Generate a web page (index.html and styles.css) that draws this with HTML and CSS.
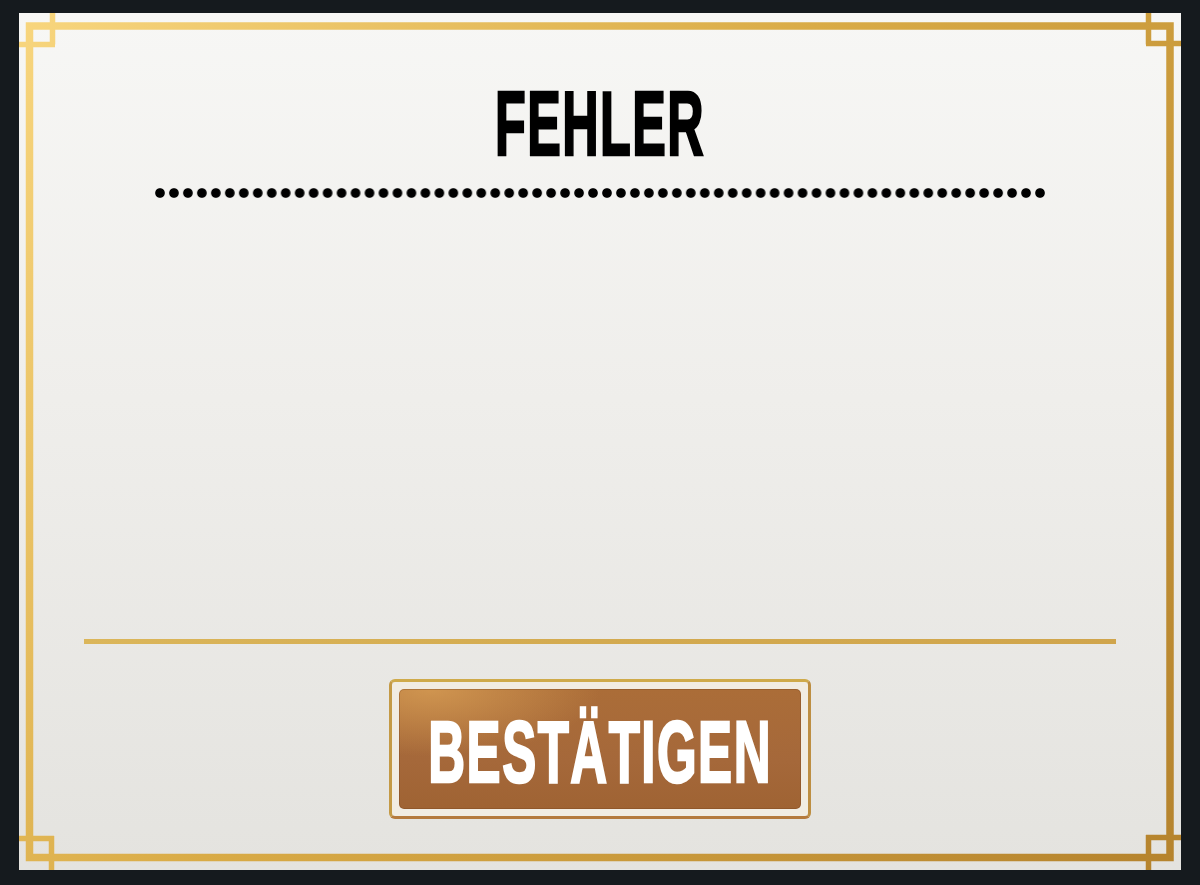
FILE: index.html
```html
<!DOCTYPE html>
<html lang="de">
<head>
<meta charset="utf-8">
<title>Fehler</title>
<link rel="stylesheet" href="styles.css">
</head>
<body>
<div class="panel">
  <svg class="frame" width="1162" height="857" viewBox="0 0 1162 857" aria-hidden="true">
    <defs>
      <linearGradient id="gold" gradientUnits="userSpaceOnUse" x1="0" y1="0" x2="1162" y2="857">
        <stop offset="0" stop-color="#f8d67e"/>
        <stop offset="0.45" stop-color="#d9ab46"/>
        <stop offset="1" stop-color="#b5832d"/>
      </linearGradient>
    </defs>
    <g fill="none" stroke="url(#gold)">
      <rect x="10.5" y="13" width="1140.5" height="831.5" stroke-width="7.5"/>
      <path d="M33.5 0 V31.5 M0 31.5 H36 M1129.5 0 V31.5 M1127 30.5 H1162 M0 825.5 H35 M32.5 823 V857 M1127 824.5 H1162 M1129.5 822 V857" stroke-width="5.5"/>
    </g>
  </svg>
  <div class="content">
    <h1 class="title"><span>FEHLER</span></h1>
    <div class="dots"></div>
    <div class="body"></div>
    <div class="rule"></div>
    <button class="confirm"><span class="confirm-inner"><span class="confirm-text">BESTÄTIGEN</span></span></button>
  </div>
</div>
</body>
</html>
```
FILE: styles.css
```css
html, body {
  margin: 0;
  padding: 0;
}
body {
  background: #151a1e;
  width: 1200px;
  height: 885px;
  overflow: hidden;
  font-family: "Liberation Sans", Arial, sans-serif;
}
.panel {
  position: relative;
  margin: 13px 0 0 19px;
  width: 1162px;
  height: 857px;
  background: linear-gradient(180deg, #f7f7f5 0%, #efeeeb 45%, #e4e3df 100%);
}
.frame {
  position: absolute;
  left: 0;
  top: 0;
}
.content {
  display: flex;
  flex-direction: column;
  align-items: center;
  padding-top: 76px;
}
.title {
  margin: 0;
  height: 68px;
  display: flex;
  align-items: center;
  justify-content: center;
  font-size: 68px;
  line-height: 68px;
  font-weight: 700;
  color: #000;
}
.title span {
  display: inline-block;
  transform: scale(0.74, 1.335);
  -webkit-text-stroke: 2px #000;
  letter-spacing: 2px;
}
.dots {
  margin-top: 31px;
  width: 895px;
  height: 10px;
  background: radial-gradient(circle at center, #000 0, #000 4.3px, rgba(0,0,0,0) 5.3px) 0 0 / 13.98px 10px repeat-x;
}
.body {
  height: 441px;
}
.rule {
  width: 1032px;
  height: 5px;
  background: linear-gradient(90deg, #dbb65a, #d3aa4f 50%, #d0a54c);
}
.confirm {
  box-sizing: border-box;
  margin-top: 35px;
  width: 422px;
  height: 140px;
  padding: 7px;
  border: 3px solid #c69c45;
  border-color: #cfaa4a #bd8e42 #b57a3d #c49a46;
  border-radius: 6px;
  background: #f1ece2;
  display: flex;
  cursor: pointer;
  font-family: inherit;
}
.confirm-inner {
  flex: 1;
  min-width: 0;
  display: flex;
  align-items: center;
  justify-content: center;
  border-radius: 5px;
  background: radial-gradient(ellipse 60% 80% at 8% 0%, rgba(214,156,84,0.85), rgba(214,156,84,0) 70%), linear-gradient(180deg, #ab6d38 0%, #a5683a 60%, #9f6333 100%);
  box-shadow: inset 0 0 0 1px rgba(120,70,30,0.35);
}
.confirm-text {
  flex: none;
  display: inline-block;
  font-size: 68px;
  line-height: 68px;
  font-weight: 700;
  color: #fff;
  transform: translateY(2px) scale(0.75, 1.294);
  -webkit-text-stroke: 2px #fff;
  letter-spacing: 2px;
}
```
